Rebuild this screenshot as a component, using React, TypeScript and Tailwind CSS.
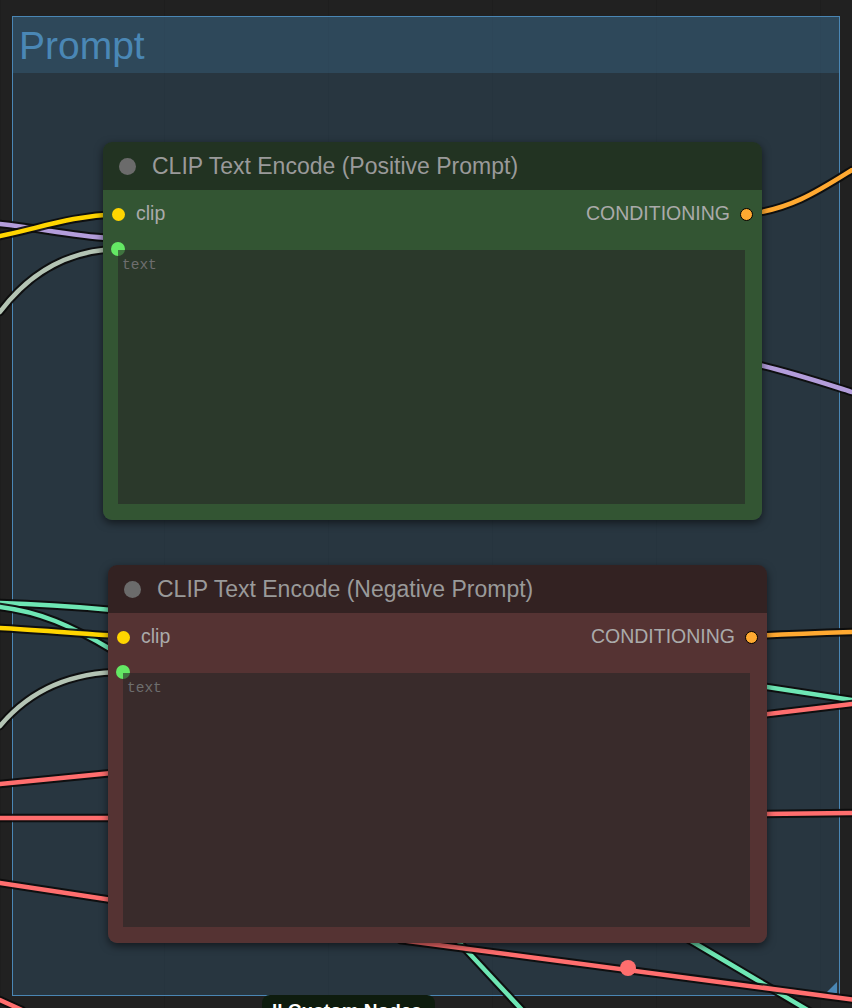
import type { ReactNode } from 'react'

type Wire = { d: string; color: string }

const wires: Wire[] = [
  // positive node inputs
  { d: 'M0,224 C40,228 70,236 110,238', color: '#b39ddb' },
  { d: 'M0,236 C40,228 70,216 118,214', color: '#ffd500' },
  { d: 'M0,312 C30,272 70,250 118,249', color: '#b4c4b4' },
  // positive node outputs
  { d: 'M747,214 C790,210 820,190 852,170', color: '#ffa931' },
  { d: 'M755,364 C790,372 820,382 852,392', color: '#b39ddb' },
  // negative node inputs
  { d: 'M0,603 C40,604 80,607 112,610', color: '#6ee6b4' },
  { d: 'M0,607 C40,612 70,625 112,650', color: '#6ee6b4' },
  { d: 'M0,628 C40,630 80,634 123,636', color: '#ffd500' },
  { d: 'M0,726 C30,690 70,672 123,672', color: '#b4c4b4' },
  { d: 'M0,784 L112,773', color: '#ff6e6e' },
  { d: 'M0,818 L112,818', color: '#ff6e6e' },
  { d: 'M0,883 L112,900', color: '#ff6e6e' },
  { d: 'M0,1000 L22,1010', color: '#ff6e6e' },
  // negative node outputs
  { d: 'M752,636 C790,634 820,633 852,632', color: '#ffa931' },
  { d: 'M760,686 L852,700', color: '#6ee6b4' },
  { d: 'M760,715 L852,704', color: '#ff6e6e' },
  { d: 'M760,814 L852,813', color: '#ff6e6e' },
  // under the negative node
  { d: 'M455,938 L524,1012', color: '#6ee6b4' },
  { d: 'M686,938 L811,1012', color: '#6ee6b4' },
  { d: 'M400,940 L856,1000', color: '#ff6e6e' },
]

function Wires() {
  return (
    <svg className="absolute inset-0" width={852} height={1008} viewBox="0 0 852 1008">
      {wires.map((w, i) => (
        <g key={i} fill="none" strokeLinecap="round">
          <path d={w.d} stroke="#0b0b0b" strokeOpacity={0.9} strokeWidth={8.5} />
          <path d={w.d} stroke={w.color} strokeWidth={4.5} />
        </g>
      ))}
      <circle cx={628} cy={968} r={8} fill="#ff6e6e" />
    </svg>
  )
}

interface NodeProps {
  title: string
  titleBg: string
  bodyBg: string
  className: string
}

function Dot({ className }: { className: string }) {
  return <span className={`block h-[13px] w-[13px] rounded-full ${className}`} />
}

function ClipNode({ title, titleBg, bodyBg, className }: NodeProps) {
  return (
    <div className={`relative z-10 w-[659px] rounded-[9px] shadow-[0_3px_8px_rgba(0,0,0,0.55)] ${className}`}>
      <div className={`flex h-[48px] items-center gap-[16px] rounded-t-[9px] pl-[16px] ${titleBg}`}>
        <span className="h-[17px] w-[17px] rounded-full bg-[#6b6b6b]" />
        <span className="text-[23px] text-[#9a9a9a]">{title}</span>
      </div>
      <div className={`rounded-b-[9px] pb-[16px] pt-[12px] ${bodyBg}`}>
        <div className="flex h-[24px] items-center justify-between px-[9px] text-[19.5px] text-[#aaaaaa]">
          <div className="flex items-center gap-[11px]">
            <Dot className="bg-[#ffd500]" />
            <span>clip</span>
          </div>
          <div className="flex items-center gap-[10px]">
            <span>CONDITIONING</span>
            <Dot className="border-[1.5px] border-black bg-[#ffa931]" />
          </div>
        </div>
        <div className="relative ml-[15px] mr-[17px] mt-[24px]">
          <span className="absolute left-[-7px] top-[-8px] h-[14px] w-[14px] rounded-full bg-[#64e864]" />
          <div className="relative h-[254px] bg-[rgba(38,38,38,0.6)] px-[4px] pt-[8px] font-['Liberation_Mono',monospace] text-[14.5px] leading-none text-[#6e6e6e]">
            text
          </div>
        </div>
      </div>
    </div>
  )
}

function PromptGroup({ children }: { children: ReactNode }) {
  return (
    <div className="relative ml-[12px] mt-[16px] h-[980px] w-[828px] border border-[#4a86b4] bg-[rgba(63,120,158,0.25)]">
      <div className="flex h-[56px] items-center bg-[rgba(63,120,158,0.28)] pl-[6px]">
        <span className="text-[39px] leading-none text-[#4a87b5]">Prompt</span>
      </div>
      {children}
      <span className="absolute bottom-[2px] right-[2px] h-0 w-0 border-l-[11px] border-b-[11px] border-l-transparent border-b-[#4a87b5]" />
    </div>
  )
}

export default function App() {
  return (
    <div className="relative h-[1008px] w-[852px] overflow-hidden bg-[#212121] font-['Liberation_Sans',Arial,sans-serif]">
      <div className="absolute inset-0 bg-[linear-gradient(to_right,rgba(0,0,0,0.1)_1px,transparent_1px)] bg-[size:164px_100%]" />
      <PromptGroup>
        <div className="flex flex-col">
          <ClipNode
            title="CLIP Text Encode (Positive Prompt)"
            titleBg="bg-[#223322]"
            bodyBg="bg-[#335533]"
            className="ml-[90px] mt-[69px]"
          />
          <ClipNode
            title="CLIP Text Encode (Negative Prompt)"
            titleBg="bg-[#332222]"
            bodyBg="bg-[#553333]"
            className="ml-[95px] mt-[45px]"
          />
        </div>
      </PromptGroup>
      <div className="pointer-events-none absolute inset-0 z-[5]">
        <Wires />
      </div>
      <div className="absolute left-[262px] top-[995px] z-20 h-[30px] w-[173px] rounded-t-[8px] bg-[#0e1c0e] pl-[10px] pt-[2px] text-[19px] font-bold text-white">
        ll Custom Nodes
      </div>
    </div>
  )
}
